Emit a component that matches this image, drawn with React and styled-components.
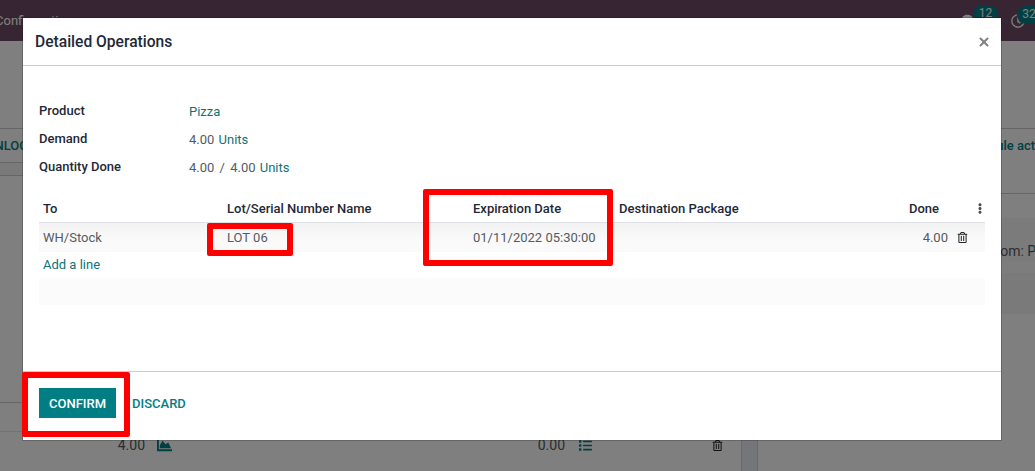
import React from "react";
import styled, { createGlobalStyle } from "styled-components";
import { X } from "lucide-react";
import {
  FaChartArea,
  FaComments,
  FaEllipsisV,
  FaList,
  FaRegClock,
  FaRegTrashAlt,
} from "react-icons/fa";

const teal = "#017e84";
const linkTeal = "#0f7378";
const ink = "#1f2937";
const muted = "#565a62";

const GlobalStyle = createGlobalStyle`
  html, body {
    margin: 0;
    height: 100%;
    overflow: hidden;
    background: #fff;
    font-family: Roboto, "Liberation Sans", sans-serif;
    font-size: 13px;
    color: ${muted};
  }
  * { box-sizing: border-box; }
`;

function App() {
  return (
    <>
      <GlobalStyle />
      <StPage>
        <StNav>
          <StNavLink>Configuration</StNavLink>
          <StSystray>
            <StTrayItem $width={44} $pad={3}>
              <FaComments size={15} color="#fff" />
              <StBadge $right={5} $width={25}>12</StBadge>
            </StTrayItem>
            <StTrayItem $width={30} $pad={8}>
              <FaRegClock size={14} color="#fff" />
              <StBadge $right={-8} $width={24}>32</StBadge>
            </StTrayItem>
          </StSystray>
        </StNav>
        <StControlPanel />
        <StWorkArea>
          <StSheet>
            <StStatusBar>
              <StUnlock>UNLOCK</StUnlock>
            </StStatusBar>
            <StThinBand />
            <StSheetBody />
            <StLineBand />
            <StMoveRow>
              <StMoveQty $width={145}>4.00</StMoveQty>
              <StMoveIcon $left={12}>
                <FaChartArea size={15} />
              </StMoveIcon>
              <StMoveQty $width={393}>0.00</StMoveQty>
              <StMoveIcon $left={14}>
                <FaList size={13} />
              </StMoveIcon>
              <StMoveTrash>
                <FaRegTrashAlt size={11} />
              </StMoveTrash>
            </StMoveRow>
          </StSheet>
          <StGutter />
          <StChatter>
            <StChatterTop>
              <StScheduleLink>Schedule activity</StScheduleLink>
            </StChatterTop>
            <StMessage>
              From: <StLink>Pizza</StLink>
            </StMessage>
            <StMessageGap />
            <StMessageBand />
          </StChatter>
        </StWorkArea>
      </StPage>

      <StScrim />

      <StModal>
        <StHeader>
          <StTitle>Detailed Operations</StTitle>
          <StClose>
            <X size={14} strokeWidth={3.4} />
          </StClose>
        </StHeader>

        <StBody>
          <StFieldRow>
            <StLabel>Product</StLabel>
            <StValue><StLink>Pizza</StLink></StValue>
          </StFieldRow>
          <StFieldRow>
            <StLabel>Demand</StLabel>
            <StValue>4.00 <StUnit>Units</StUnit></StValue>
          </StFieldRow>
          <StFieldRow>
            <StLabel>Quantity Done</StLabel>
            <StValue>
              4.00 <StSlash>/</StSlash> 4.00 <StUnit>Units</StUnit>
            </StValue>
          </StFieldRow>

          <StTable>
            <StHeadRow>
              <StHeadCell>To</StHeadCell>
              <StHeadCell>Lot/Serial Number Name</StHeadCell>
              <StHeadCell>Expiration Date</StHeadCell>
              <StHeadCell>Destination Package</StHeadCell>
              <StHeadCell $right>Done</StHeadCell>
              <StKebabCell>
                <FaEllipsisV size={11} />
              </StKebabCell>
            </StHeadRow>
            <StDataRow>
              <StCell>WH/Stock</StCell>
              <StCell>LOT 06</StCell>
              <StCell>01/11/2022 05:30:00</StCell>
              <StCell />
              <StCell $right>4.00</StCell>
              <StTrashCell>
                <FaRegTrashAlt size={11} />
              </StTrashCell>
            </StDataRow>
            <StAddRow>Add a line</StAddRow>
            <StEmptyRow />
          </StTable>
        </StBody>

        <StFooter>
          <StConfirm>CONFIRM</StConfirm>
          <StDiscard>DISCARD</StDiscard>
        </StFooter>
      </StModal>

      <StMark $left={207} $top={223} $width={86} $height={33} />
      <StMark $left={423} $top={189} $width={190} $height={77} />
      <StMark $left={22} $top={372} $width={108} $height={65} />
    </>
  );
}

export default App;

const StPage = styled.div`
  width: 100vw;
  height: 100vh;
  display: flex;
  flex-direction: column;
  overflow: hidden;
`;

const StNav = styled.div`
  height: 41px;
  flex: none;
  display: flex;
  align-items: center;
  justify-content: space-between;
  background: #714b67;
`;

const StNavLink = styled.span`
  margin-left: -5px;
  font-size: 13px;
  color: #fff;
`;

const StSystray = styled.div`
  display: flex;
  align-items: center;
  margin-right: 2px;
`;

const StTrayItem = styled.div`
  position: relative;
  width: ${(p) => p.$width}px;
  display: flex;
  justify-content: flex-start;
  padding-left: ${(p) => p.$pad}px;
`;

const StBadge = styled.span`
  position: absolute;
  top: -8px;
  right: ${(p) => p.$right}px;
  width: ${(p) => p.$width}px;
  height: 18px;
  border-radius: 9px;
  background: ${teal};
  color: #fff;
  font-size: 12px;
  line-height: 16px;
  text-align: center;
`;

const StControlPanel = styled.div`
  height: 88px;
  flex: none;
  background: #fff;
  border-bottom: 1px solid #ccc;
`;

const StWorkArea = styled.div`
  flex: 1;
  display: flex;
  min-height: 0;
`;

const StSheet = styled.div`
  width: 741px;
  flex: none;
  display: flex;
  flex-direction: column;
  background: #fff;
`;

const StStatusBar = styled.div`
  height: 34px;
  flex: none;
  display: flex;
  align-items: center;
  border-bottom: 1px solid #ccc;
`;

const StUnlock = styled.span`
  margin-left: -14px;
  font-size: 13px;
  font-weight: 500;
  color: ${teal};
`;

const StThinBand = styled.div`
  height: 13px;
  flex: none;
  background: #f5f5f7;
  border-bottom: 1px solid #ccc;
`;

const StSheetBody = styled.div`
  height: 227px;
  flex: none;
  border-bottom: 1px solid #ccc;
`;

const StLineBand = styled.div`
  height: 29px;
  flex: none;
  border-bottom: 1px solid #e4e4e4;
`;

const StMoveRow = styled.div`
  height: 26px;
  flex: none;
  display: flex;
  align-items: center;
  color: ${muted};
`;

const StMoveQty = styled.span`
  width: ${(p) => p.$width}px;
  font-size: 14px;
  text-align: right;
`;

const StMoveIcon = styled.span`
  display: flex;
  margin-left: ${(p) => p.$left}px;
  color: ${teal};
`;

const StMoveTrash = styled.span`
  display: flex;
  margin-left: 120px;
  color: #212529;
`;

const StGutter = styled.div`
  width: 17px;
  flex: none;
  background: #e9ecf2;
  border-left: 1px solid #ced4da;
  border-right: 1px solid #ced4da;
`;

const StChatter = styled.div`
  flex: 1;
  display: flex;
  flex-direction: column;
  background: #fff;
  overflow: hidden;
`;

const StChatterTop = styled.div`
  height: 65px;
  flex: none;
  padding: 9px 0 0 202px;
  border-bottom: 1px solid #ccc;
  margin-bottom: 24px;
`;

const StScheduleLink = styled.span`
  white-space: nowrap;
  font-size: 13px;
  font-weight: 500;
  color: ${teal};
`;

const StMessage = styled.div`
  height: 43px;
  flex: none;
  padding: 25px 0 0 230px;
  background: #f6f6f7;
  white-space: nowrap;
  font-size: 14px;
  line-height: 16px;
`;

const StMessageGap = styled.div`
  height: 12px;
  flex: none;
  background: #fbfbfb;
`;

const StMessageBand = styled.div`
  height: 41px;
  flex: none;
  background: #f4f4f5;
`;

const StLink = styled.span`
  color: ${linkTeal};
`;

const StScrim = styled.div`
  position: fixed;
  inset: 0;
  background: rgba(0, 0, 0, 0.5);
`;

const StModal = styled.div`
  position: fixed;
  left: 22px;
  top: 17px;
  width: 980px;
  height: 424px;
  display: flex;
  flex-direction: column;
  background: #fff;
  border: 1px solid rgba(0, 0, 0, 0.2);
  background-clip: padding-box;
`;

const StHeader = styled.div`
  height: 48px;
  flex: none;
  display: flex;
  align-items: center;
  justify-content: space-between;
  padding: 0 10px 0 12px;
  border-bottom: 1px solid #ccc;
`;

const StTitle = styled.h4`
  margin: 0;
  font-size: 15.6px;
  font-weight: 500;
  color: ${ink};
`;

const StClose = styled.span`
  display: flex;
  color: #808080;
`;

const StBody = styled.div`
  flex: 1;
  padding: 31px 16px 0;
`;

const StFieldRow = styled.div`
  height: 28px;
  display: flex;
  align-items: center;
`;

const StLabel = styled.div`
  width: 150px;
  margin-top: -2px;
  font-weight: 500;
  color: ${ink};
`;

const StValue = styled.div``;

const StUnit = styled.span`
  margin-left: 1px;
  color: ${linkTeal};
`;

const StSlash = styled.span`
  margin: 0 2px;
`;

const StTable = styled.div`
  margin-top: 18px;
  display: flex;
  flex-direction: column;
`;

const columns = "184px 246px 146px 245px 93px 32px";

const StHeadRow = styled.div`
  display: grid;
  grid-template-columns: ${columns};
  height: 24px;
  padding-bottom: 4px;
  border-bottom: 1px solid #dee2e6;
  align-items: center;
`;

const StHeadCell = styled.div`
  padding: 0 ${(p) => (p.$right ? "14px" : "4px")} 0 4px;
  text-align: ${(p) => (p.$right ? "right" : "left")};
  font-weight: 500;
  color: ${ink};
`;

const StKebabCell = styled.div`
  display: flex;
  padding-left: 22px;
  color: #4c4c4c;
`;

const StDataRow = styled.div`
  display: grid;
  grid-template-columns: ${columns};
  height: 29px;
  align-items: center;
  background: linear-gradient(#f2f2f3, #fafafa 60%);
`;

const StCell = styled.div`
  padding: 0 ${(p) => (p.$right ? "5px" : "4px")} 0 4px;
  text-align: ${(p) => (p.$right ? "right" : "left")};
`;

const StTrashCell = styled.div`
  display: flex;
  padding-left: 4px;
  color: #212529;
`;

const StAddRow = styled.div`
  height: 26px;
  display: flex;
  align-items: center;
  padding: 0 0 2px 4px;
  color: ${linkTeal};
`;

const StEmptyRow = styled.div`
  height: 27px;
  background: #fbfbfb;
`;

const StFooter = styled.div`
  height: 69px;
  flex: none;
  display: flex;
  align-items: flex-start;
  padding: 16px;
  border-top: 1px solid #ccc;
`;

const StConfirm = styled.button`
  width: 77px;
  height: 30px;
  padding: 0;
  border: 0;
  background: ${teal};
  color: #fff;
  font: 500 13px Roboto, sans-serif;
`;

const StDiscard = styled.button`
  height: 30px;
  margin-left: 16px;
  padding: 0;
  border: 0;
  background: none;
  color: ${teal};
  font: 500 13px Roboto, sans-serif;
`;

const StMark = styled.div`
  position: fixed;
  left: ${(p) => p.$left}px;
  top: ${(p) => p.$top}px;
  width: ${(p) => p.$width}px;
  height: ${(p) => p.$height}px;
  border: 6px solid #ff0000;
  border-radius: 2px;
`;
